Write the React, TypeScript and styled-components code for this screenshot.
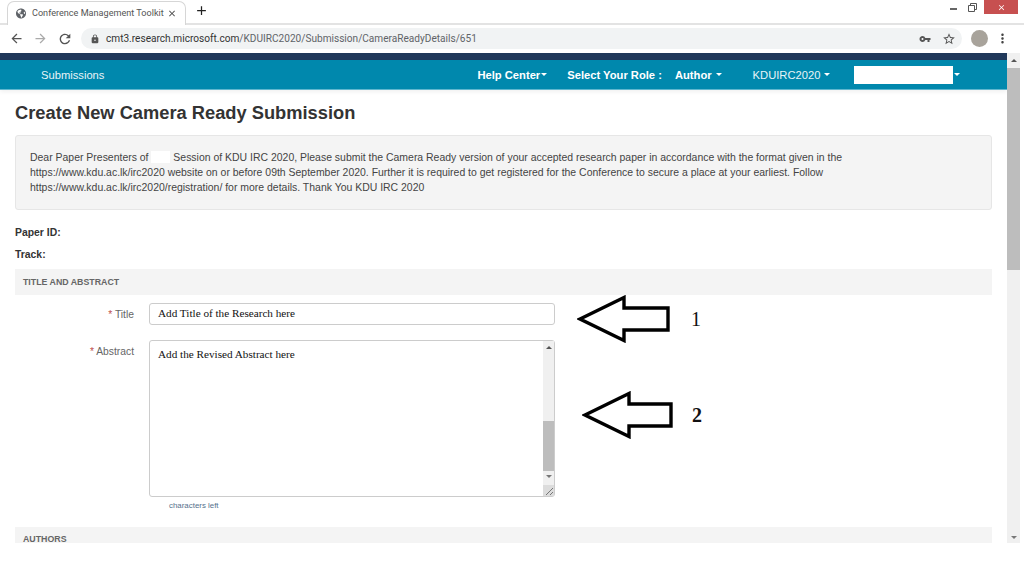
import styled, { createGlobalStyle } from "styled-components";
import { FaGlobeAmericas } from "react-icons/fa";
import {
  MdArrowBack,
  MdArrowForward,
  MdClose,
  MdAdd,
  MdLock,
  MdMoreVert,
  MdRefresh,
  MdStarBorder,
  MdVpnKey,
} from "react-icons/md";

const GlobalStyle = createGlobalStyle`
  html, body {
    margin: 0;
    padding: 0;
    background: #fff;
    overflow: hidden;
  }
  * { box-sizing: border-box; }
`;

const Screen = styled.div`
  width: 1024px;
  height: 573px;
  display: flex;
  flex-direction: column;
  font-family: "Liberation Sans", Arial, sans-serif;
  background: #fff;
`;

const TabStrip = styled.div`
  height: 25px;
  display: flex;
  align-items: flex-end;
  padding-left: 7px;
  background: #fff;
  border-bottom: 2px solid #e3e3e3;
`;

const Tab = styled.div`
  width: 179px;
  height: 24px;
  margin-bottom: -2px;
  display: flex;
  align-items: center;
  padding: 0 8px 1px 8px;
  background: #fff;
  border: 1px solid #d6d6d6;
  border-bottom: none;
  border-radius: 7px 7px 0 0;
  color: #5f6368;
`;

const TabTitle = styled.span`
  width: 130px;
  margin-left: 6px;
  font: 9.1px Roboto, sans-serif;
  color: #555;
  white-space: nowrap;
`;

const TabClose = styled(MdClose)`
  margin-left: 5px;
  color: #444;
`;

const NewTab = styled(MdAdd)`
  margin: 0 0 5px 8px;
  color: #222;
`;

const WindowControls = styled.div`
  margin-left: auto;
  margin-right: 6px;
  align-self: flex-start;
  display: flex;
  align-items: center;
`;

const Minimize = styled.div`
  width: 7px;
  height: 2px;
  margin: 3px 11px 0 0;
  background: #666;
`;

const Restore = styled.svg`
  margin-right: 7px;
`;

const CloseWindow = styled.div`
  width: 34px;
  height: 14px;
  display: flex;
  align-items: center;
  justify-content: center;
  background: #c75050;
  color: #fff;
`;

const Toolbar = styled.div`
  height: 28px;
  display: flex;
  align-items: center;
  padding: 0 13px 1px 9px;
  background: #fff;
`;

const NavIcons = styled.div`
  width: 72px;
  display: flex;
  gap: 9px;
  color: #555;
`;

const Omnibox = styled.div`
  width: 881px;
  height: 21px;
  display: flex;
  align-items: center;
  padding: 0 6px 0 9px;
  background: #f1f3f4;
  border-radius: 11px;
`;

const Url = styled.span`
  margin-left: 6px;
  font: 10.1px Roboto, sans-serif;
  color: #5f6368;
  white-space: nowrap;

  b {
    font-weight: 400;
    color: #333;
  }
`;

const OmniIcons = styled.div`
  margin-left: auto;
  display: flex;
  align-items: center;
  gap: 11px;
  color: #555;
`;

const Avatar = styled.div`
  width: 17px;
  height: 17px;
  margin-left: 9px;
  border-radius: 50%;
  background: #a8a39b;
`;

const MoreButton = styled(MdMoreVert)`
  margin-left: 7px;
  color: #444;
`;

const Viewport = styled.div`
  height: 490px;
  display: flex;
`;

const Page = styled.div`
  width: 1007px;
  overflow: hidden;
`;

const DarkBar = styled.div`
  height: 7px;
  background: #20385a;
`;

const NavBar = styled.nav`
  height: 30px;
  display: flex;
  align-items: center;
  padding-left: 41px;
  background: #0088ad;
  color: #e8f4f7;
  font-size: 11.2px;
  border-bottom: 1px solid #5fb7cf;
  box-shadow: 0 2px 4px rgba(0, 0, 0, 0.06);
`;

const NavItem = styled.span<{ $left: number; $bold?: boolean }>`
  margin-left: ${(p) => p.$left}px;
  display: inline-flex;
  align-items: center;
  font-weight: ${(p) => (p.$bold ? 700 : 400)};
  color: ${(p) => (p.$bold ? "#fff" : "#e8f4f7")};
  white-space: nowrap;
`;

const Caret = styled.i<{ $gap?: number }>`
  width: 0;
  height: 0;
  margin-left: ${(p) => p.$gap ?? 1}px;
  border-left: 3px solid transparent;
  border-right: 3px solid transparent;
  border-top: 3px solid #fff;
`;

const RedactedUser = styled.span`
  width: 99px;
  height: 18px;
  margin-left: 24px;
  background: #fff;
`;

const Content = styled.main`
  padding: 0 15px;
`;

const Heading = styled.h1`
  margin: 13px 0 13px;
  height: 19px;
  font-size: 18.3px;
  line-height: 19px;
  font-weight: 700;
  color: #333;
`;

const Notice = styled.div`
  height: 75px;
  padding: 14px 14px 0;
  background: #f4f4f4;
  border: 1px solid #e6e6e6;
  border-radius: 3px;
  font-size: 10.46px;
  line-height: 15px;
  color: #444;
`;

const Blank = styled.span`
  display: inline-block;
  width: 19px;
  height: 12px;
  vertical-align: -2px;
  background: #fff;
`;

const Meta = styled.div`
  height: 22px;
  font-size: 10.4px;
  line-height: 22px;
  font-weight: 700;
  color: #333;
`;

const MetaList = styled.div`
  margin-top: 12px;
  margin-bottom: 3px;
`;

const SectionBar = styled.div<{ $height: number; $top?: number; $pad: number }>`
  height: ${(p) => p.$height}px;
  margin-top: ${(p) => p.$top ?? 0}px;
  padding: ${(p) => p.$pad}px 8px 0;
  background: #f4f4f4;
  font-size: 8.8px;
  line-height: 10px;
  font-weight: 700;
  color: #666;
  overflow: hidden;
`;

const FieldRow = styled.div<{ $top: number }>`
  margin-top: ${(p) => p.$top}px;
  display: flex;
`;

const FieldLabel = styled.label`
  width: 119px;
  padding-top: 6px;
  text-align: right;
  font-size: 10.3px;
  line-height: 12px;
  color: #666;

  em {
    font-style: normal;
    color: #c0504d;
  }
`;

const Control = styled.div`
  position: relative;
  width: 406px;
  margin-left: 15px;
`;

const TitleInput = styled.div`
  height: 22px;
  padding: 2px 8px;
  border: 1px solid #ccc;
  border-radius: 3px;
  font: 11.2px/14px "Liberation Serif", serif;
  color: #111;
`;

const AbstractBox = styled.div`
  height: 157px;
  display: flex;
  justify-content: space-between;
  padding-left: 8px;
  border: 1px solid #ccc;
  border-radius: 3px;
  font: 11.2px/14px "Liberation Serif", serif;
  color: #111;
`;

const AbstractText = styled.span`
  padding-top: 6px;
`;

const InnerScroll = styled.div`
  width: 11px;
  display: flex;
  flex-direction: column;
  align-items: center;
  background: #f0f0f0;
`;

const ScrollArrow = styled.i<{ $down?: boolean; $margin?: string }>`
  width: 0;
  height: 0;
  margin: ${(p) => p.$margin ?? "0"};
  border-left: 3px solid transparent;
  border-right: 3px solid transparent;
  border-bottom: ${(p) => (p.$down ? "0" : "3px solid #555")};
  border-top: ${(p) => (p.$down ? "3px solid #777" : "0")};
`;

const InnerThumb = styled.div`
  width: 100%;
  height: 50px;
  margin-top: 72px;
  background: #bdbdbd;
`;

const ResizeCorner = styled.svg`
  margin-top: auto;
  background: #dcdcdc;
`;

const CharsLeft = styled.div`
  margin: 4px 0 0 20px;
  font-size: 7.9px;
  line-height: 9px;
  color: #55708c;
`;

const Annotation = styled.div<{ $top: number; $left: number; $gap: number }>`
  position: absolute;
  top: ${(p) => p.$top}px;
  left: ${(p) => p.$left}px;
  display: flex;
  align-items: center;
  gap: ${(p) => p.$gap}px;
`;

const AnnotationNumber = styled.span<{ $bold?: boolean }>`
  margin-top: 1px;
  font-family: "Liberation Serif", serif;
  font-size: 20px;
  font-weight: ${(p) => (p.$bold ? 700 : 400)};
  color: #111;
`;

const PageScrollbar = styled.div`
  width: 13px;
  display: flex;
  flex-direction: column;
  align-items: center;
  background: #f0f0f0;
`;

const PageThumb = styled.div`
  width: 100%;
  height: 202px;
  margin-top: 6px;
  background: #bdbdbd;
`;

const BlockArrow = ({ width }: { width: number }) => (
  <svg width={width} height="48" viewBox={`0 0 ${width} 48`} fill="#fff" stroke="#000" strokeWidth="3.4">
    <path d={`M3 24 L47 2.5 V13 H${width - 3} V35 H47 V45.5 Z`} />
  </svg>
);

export default function App() {
  return (
    <Screen>
      <GlobalStyle />
      <TabStrip>
        <Tab>
          <FaGlobeAmericas size={11} />
          <TabTitle>Conference Management Toolkit</TabTitle>
          <TabClose size={11} />
        </Tab>
        <NewTab size={15} />
        <WindowControls>
          <Minimize />
          <Restore width="9" height="9" viewBox="0 0 9 9" fill="none" stroke="#555">
            <path d="M.5 2.5h6v6h-6z M2.5 2.5v-2h6v6h-2" />
          </Restore>
          <CloseWindow>
            <MdClose size={9} />
          </CloseWindow>
        </WindowControls>
      </TabStrip>
      <Toolbar>
        <NavIcons>
          <MdArrowBack size={15} />
          <MdArrowForward size={15} color="#aaa" />
          <MdRefresh size={16} />
        </NavIcons>
        <Omnibox>
          <MdLock size={10} color="#555" />
          <Url>
            <b>cmt3.research.microsoft.com</b>/KDUIRC2020/Submission/CameraReadyDetails/651
          </Url>
          <OmniIcons>
            <MdVpnKey size={12} />
            <MdStarBorder size={14} />
          </OmniIcons>
        </Omnibox>
        <Avatar />
        <MoreButton size={15} />
      </Toolbar>
      <Viewport>
        <Page>
          <DarkBar />
          <NavBar>
            <span>Submissions</span>
            <NavItem $left={373} $bold>
              Help Center
              <Caret />
            </NavItem>
            <NavItem $left={20} $bold>Select Your Role :</NavItem>
            <NavItem $left={13} $bold>
              Author
              <Caret $gap={4} />
            </NavItem>
            <NavItem $left={31}>
              KDUIRC2020
              <Caret $gap={4} />
            </NavItem>
            <RedactedUser />
            <Caret $gap={1} />
          </NavBar>
          <Content>
            <Heading>Create New Camera Ready Submission</Heading>
            <Notice>
              Dear Paper Presenters of <Blank /> Session of KDU IRC 2020, Please submit the Camera Ready version of your accepted research paper in accordance with the format given in the
              <br />
              https://www.kdu.ac.lk/irc2020 website on or before 09th September 2020. Further it is required to get registered for the Conference to secure a place at your earliest. Follow
              <br />
              https://www.kdu.ac.lk/irc2020/registration/ for more details. Thank You KDU IRC 2020
            </Notice>
            <MetaList>
              <Meta>Paper ID:</Meta>
              <Meta>Track:</Meta>
            </MetaList>
            <SectionBar $height={26} $pad={8}>TITLE AND ABSTRACT</SectionBar>
            <FieldRow $top={8}>
              <FieldLabel>
                <em>*</em> Title
              </FieldLabel>
              <Control>
                <TitleInput>Add Title of the Research here</TitleInput>
                <Annotation $top={-8} $left={428} $gap={20}>
                  <BlockArrow width={94} />
                  <AnnotationNumber>1</AnnotationNumber>
                </Annotation>
              </Control>
            </FieldRow>
            <FieldRow $top={15}>
              <FieldLabel>
                <em>*</em> Abstract
              </FieldLabel>
              <Control>
                <AbstractBox>
                  <AbstractText>Add the Revised Abstract here</AbstractText>
                  <InnerScroll>
                    <ScrollArrow $margin="5px 0 0" />
                    <InnerThumb />
                    <ScrollArrow $down $margin="4px 0 0" />
                    <ResizeCorner width="11" height="11" viewBox="0 0 11 11" stroke="#777">
                      <path d="M3 10 L10 3 M7 10 L10 7" />
                    </ResizeCorner>
                  </InnerScroll>
                </AbstractBox>
                <Annotation $top={51} $left={433} $gap={18}>
                  <BlockArrow width={92} />
                  <AnnotationNumber $bold>2</AnnotationNumber>
                </Annotation>
                <CharsLeft>characters left</CharsLeft>
              </Control>
            </FieldRow>
            <SectionBar $height={16} $top={17} $pad={7}>AUTHORS</SectionBar>
          </Content>
        </Page>
        <PageScrollbar>
          <ScrollArrow $margin="6px 0 0" />
          <PageThumb />
          <ScrollArrow $down $margin="auto 0 4px" />
        </PageScrollbar>
      </Viewport>
    </Screen>
  );
}
